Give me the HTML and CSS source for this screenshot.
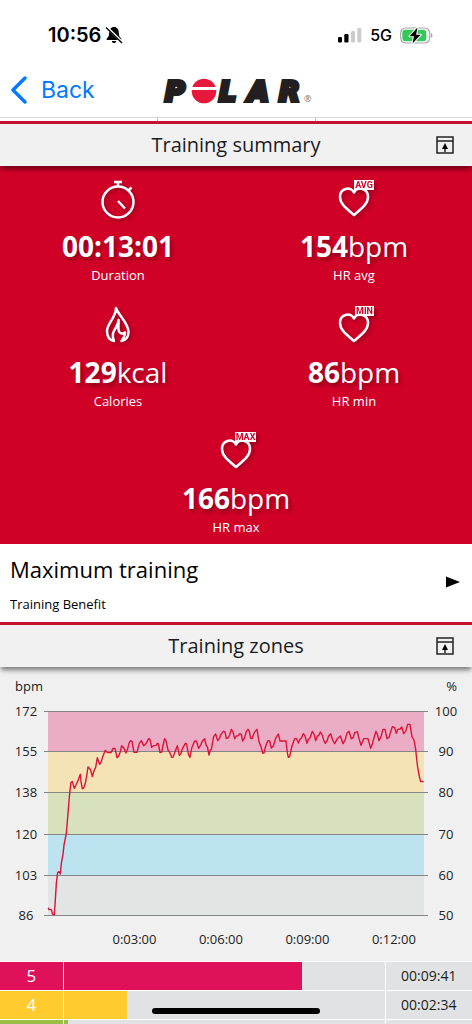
FILE: index.html
```html
<!DOCTYPE html>
<html lang="en">
<head>
<meta charset="utf-8">
<meta name="viewport" content="width=device-width, initial-scale=1">
<title>Training summary</title>
<link rel="stylesheet" href="styles.css">
</head>
<body>
<div class="app">
  <div class="status">
    <div class="status-left">
      <span class="clock">10:56</span>
      <svg class="bell" viewBox="0 0 18 18" width="18" height="18" aria-hidden="true">
        <path d="M9 1C5.800 1 4.300 3.500 4.200 6.500C4.100 10 3.400 10.800 2 12.200C1.200 13.200 1.500 14 2.500 14H15.500C16.500 14 16.800 13.200 16 12.200C14.600 10.800 13.900 10 13.800 6.500C13.700 3.500 12.200 1 9 1ZM6.800 15H11.200C11 16.500 10.200 17 9 17S7 16.500 6.800 15Z"/>
        <path d="M1.800 1.200L17.500 16.500" stroke="#fff" stroke-width="2.600"/>
        <path d="M1 1.500L17 17" stroke="#000" stroke-width="1.400"/>
      </svg>
    </div>
    <div class="status-right">
      <svg viewBox="0 0 25 16" width="25" height="16" aria-hidden="true">
        <rect x="1" y="10" width="4" height="5.500" rx="1.200"/>
        <rect x="7.300" y="7" width="4.200" height="8.500" rx="1.200"/>
        <rect x="14" y="4" width="4" height="11.500" rx="1.200" fill="#ccc"/>
        <rect x="20.300" y="1" width="4" height="14.500" rx="1.200" fill="#ccc"/>
      </svg>
      <span class="network">5G</span>
      <svg viewBox="0 0 33 17" width="33" height="17" aria-hidden="true">
        <rect x="0.700" y="1" width="29" height="15" rx="5" fill="#fff" stroke="#a5a5a5" stroke-width="1.200"/>
        <rect x="2.300" y="2.800" width="24" height="11.400" rx="3.300" fill="#34c759"/>
        <path d="M31 6V11Q32.500 10.300 32.500 8.500T31 6Z" fill="#a5a5a5"/>
        <path d="M17.500 0.500L9.500 9.300H14L12.500 16.500L20.700 7.700H16.100Z" stroke="#fff" stroke-width="2" stroke-linejoin="round"/>
        <path d="M17.500 0.500L9.500 9.300H14L12.500 16.500L20.700 7.700H16.100Z"/>
      </svg>
    </div>
  </div>

  <header class="nav">
    <button class="back" type="button">
      <svg viewBox="0 0 17 28" width="17" height="28" aria-hidden="true"><path d="M15 2L3 14L15 26" fill="none" stroke="#007aff" stroke-width="3.400" stroke-linecap="round" stroke-linejoin="round"/></svg>
      <span>Back</span>
    </button>
    <svg class="logo" viewBox="0 0 152 32" width="152" height="32" role="img" aria-label="Polar">
      <g class="wordmark">
        <text x="5" y="27">P</text>
        <text x="59" y="27">L</text>
        <text x="88" y="27">A</text>
        <text x="119" y="27">R</text>
      </g>
      <circle cx="44" cy="17" r="12.300" fill="#e6183c"/>
      <rect x="31" y="13" width="26" height="3" fill="#fff"/>
      <text class="mark" x="144" y="28">®</text>
    </svg>
  </header>
  <div class="tabs"><i></i><i></i><i></i></div>

  <main>
    <div class="section-head">
      <h2>Training summary</h2>
      <button type="button" aria-label="Collapse training summary">
        <svg viewBox="0 0 18 18" width="18" height="18"><path d="M1 1H17V17H1ZM1 5H17M9 16V11" fill="none" stroke="#222" stroke-width="1.500"/><path d="M9 7L12 13H6Z"/></svg>
      </button>
    </div>

    <section class="summary">
      <div class="stat">
        <svg viewBox="0 0 42 42"><circle cx="21" cy="24" r="15.500"/><path d="M21 9V4M17 4H25M31 13L34.500 9.500M21 23L28 30.500"/></svg>
        <p class="value"><b>00:13:01</b></p>
        <p class="label">Duration</p>
      </div>
      <div class="stat">
        <svg viewBox="0 0 42 42"><path d="M21 37C14 31 7 26 7 19C7 10 17 8 21 14.500C25 8 35 10 35 19C35 26 28 31 21 37Z"/><rect x="21" y="2" width="20" height="10"/><text x="31" y="10">AVG</text></svg>
        <p class="value"><b>154</b>bpm</p>
        <p class="label">HR avg</p>
      </div>
      <div class="stat">
        <svg viewBox="0 0 42 42"><path d="M17 37C12 36 10 32 10 27C10 19 19 14 19 4C22 12 31.500 19 31.500 28C31.500 33 28.500 36.500 24.500 37C26 34.500 28 33 28 28.500C26 30.500 23 29.500 22 27.500C20.500 24 22 20 21.500 16C21.500 18.500 20.500 21 19 23.500C17 27 14 30 17 37Z"/></svg>
        <p class="value"><b>129</b>kcal</p>
        <p class="label">Calories</p>
      </div>
      <div class="stat">
        <svg viewBox="0 0 42 42"><path d="M21 37C14 31 7 26 7 19C7 10 17 8 21 14.500C25 8 35 10 35 19C35 26 28 31 21 37Z"/><rect x="22" y="2" width="19" height="10"/><text x="31.500" y="10">MIN</text></svg>
        <p class="value"><b>86</b>bpm</p>
        <p class="label">HR min</p>
      </div>
      <div class="stat wide">
        <svg viewBox="0 0 42 42"><path d="M21 37C14 31 7 26 7 19C7 10 17 8 21 14.500C25 8 35 10 35 19C35 26 28 31 21 37Z"/><rect x="20" y="2" width="21" height="10"/><text x="30.500" y="10">MAX</text></svg>
        <p class="value"><b>166</b>bpm</p>
        <p class="label">HR max</p>
      </div>
    </section>

    <button class="benefit" type="button">
      <span class="benefit-text">
        <span class="benefit-title">Maximum training</span>
        <span class="benefit-sub">Training Benefit</span>
      </span>
      <svg viewBox="0 0 14 12" width="14" height="12" aria-hidden="true"><path d="M0 0.500L14 6L0 11.500Z"/></svg>
    </button>

    <div class="section-head">
      <h2>Training zones</h2>
      <button type="button" aria-label="Collapse training zones">
        <svg viewBox="0 0 18 18" width="18" height="18"><path d="M1 1H17V17H1ZM1 5H17M9 16V11" fill="none" stroke="#222" stroke-width="1.500"/><path d="M9 7L12 13H6Z"/></svg>
      </button>
    </div>

    <section class="chart">
      <div class="units"><span>bpm</span><span>%</span></div>
      <div class="chart-body">
        <div class="scale"><span>172</span><span>155</span><span>138</span><span>120</span><span>103</span><span>86</span></div>
        <div class="plot">
          <div class="bands"><i class="z5"></i><i class="z4"></i><i class="z3"></i><i class="z2"></i><i class="z1"></i></div>
          <svg class="curve" viewBox="144 123 1128 612" preserveAspectRatio="none" role="img" aria-label="Heart rate curve">
            <polyline points="145,713 147,719 154,719 158,733 163,734 166,690 169,640 173,608 177,605 181,612 184,580 189,553 192,525 199,490 204,430 209,370 213,337 217,335 223,355 228,345 234,332 241,313 243,335 247,356 251,354 256,340 260,318 264,291 268,295 272,300 277,320 282,303 287,292 292,263 299,283 304,275 308,260 316,241 322,248 333,248 339,235 345,235 351,263 356,258 361,245 365,227 372,235 378,249 383,236 388,217 392,212 396,214 402,247 411,247 418,220 424,212 431,227 438,221 446,206 450,208 455,232 461,227 468,226 472,220 475,221 480,248 485,246 490,222 494,206 498,213 504,240 509,247 515,262 519,262 524,248 532,227 538,256 542,252 548,235 556,220 560,222 565,252 570,262 575,235 584,213 589,213 596,235 602,225 608,212 614,206 618,225 622,230 627,255 631,240 634,238 637,222 641,200 647,192 653,212 658,206 663,193 670,184 675,186 679,205 684,204 689,195 694,178 699,186 704,206 709,198 715,197 719,191 724,193 728,213 734,203 739,184 744,178 748,184 752,205 756,206 761,192 765,185 771,178 777,215 783,230 788,249 792,249 796,232 801,218 804,212 809,213 814,234 820,228 827,205 835,192 840,213 858,213 862,248 865,262 869,260 876,228 884,206 890,206 895,219 900,208 905,203 910,191 915,198 921,220 925,208 930,204 937,184 942,192 947,212 952,198 956,197 961,186 967,196 971,210 976,220 981,213 986,198 992,191 998,210 1004,221 1012,206 1021,198 1029,221 1035,211 1041,190 1047,184 1054,206 1059,204 1064,188 1072,185 1077,205 1083,226 1091,206 1104,206 1112,235 1117,222 1123,200 1128,184 1132,193 1137,212 1143,200 1149,178 1155,178 1161,206 1167,202 1172,185 1177,170 1184,173 1189,190 1193,178 1201,177 1205,171 1211,191 1218,182 1223,163 1230,163 1236,200 1242,210 1247,238 1252,285 1257,315 1262,335 1271,335"/>
          </svg>
        </div>
        <div class="scale"><span>100</span><span>90</span><span>80</span><span>70</span><span>60</span><span>50</span></div>
      </div>
      <div class="times"><span>0:03:00</span><span>0:06:00</span><span>0:09:00</span><span>0:12:00</span></div>
    </section>

    <table class="zones">
      <tr><th scope="row" class="c5">5</th><td><div class="bar c5" style="width:74.4%"></div></td><td class="time">00:09:41</td></tr>
      <tr><th scope="row" class="c4">4</th><td><div class="bar c4" style="width:19.7%"></div></td><td class="time">00:02:34</td></tr>
      <tr><th scope="row" class="c3"></th><td><div class="bar c3" style="width:1.4%"></div></td><td class="time"></td></tr>
    </table>
  </main>
  <div class="home-indicator"></div>
</div>
</body>
</html>
```
FILE: styles.css
```css
* { box-sizing: border-box; }
body { margin: 0; background: #fff; color: #1c1c1e; font-family: "Open Sans", "Noto Sans", sans-serif; }
button { margin: 0; padding: 0; border: 0; background: none; color: inherit; font: inherit; cursor: pointer; }
svg { display: block; flex: none; }
h2, p { margin: 0; font-weight: 400; }
.app { display: flex; flex-direction: column; height: 100vh; overflow: hidden; }
main { flex: 1; min-height: 0; overflow: hidden; }

.status { display: flex; flex: none; justify-content: space-between; height: 70px; padding: 0 39px 0 48px; font-family: Inter, "Liberation Sans", sans-serif; color: #000; }
.status-left, .status-right { display: flex; align-items: center; }
.status-left { gap: 4px; }
.status-right { gap: 8px; }
.clock { font-size: 20px; font-weight: 600; }
.network { font-size: 16px; font-weight: 500; }

.nav { display: grid; flex: none; grid-template-columns: 1fr auto 1fr; align-items: center; height: 47px; padding: 0 10px 7px; }
.back { display: flex; align-items: center; gap: 14px; color: #007aff; font-family: Inter, "Liberation Sans", sans-serif; font-size: 23px; line-height: 28px; }
.logo { overflow: visible; }
.wordmark { font: italic 700 27px "DejaVu Sans", sans-serif; fill: #231f20; stroke: #231f20; stroke-width: 4; }
.mark { font: 9px "Open Sans", sans-serif; fill: #777; }
.tabs { display: grid; flex: none; grid-template-columns: repeat(3, 1fr); height: 4px; border-top: 1px solid #d9d9d9; }
.tabs i + i { border-left: 1px solid #bbb; }

.section-head { position: relative; z-index: 1; display: grid; grid-template-columns: 18px 1fr 18px; align-items: center; height: 45px; padding: 0 18px; border-top: 3px solid #c4122f; background: #f1f1f1; box-shadow: 0 4px 5px -1px rgba(0, 0, 0, .5); }
.section-head h2 { grid-column: 2; text-align: center; font-size: 20px; line-height: 30px; }

.summary { display: grid; grid-template-columns: 1fr 1fr; background: #d10027; color: #fff; text-align: center; }
.stat { display: flex; flex-direction: column; align-items: center; padding: 12px 0 8px; }
.stat.wide { grid-column: 1 / 3; }
.stat svg { width: 42px; height: 42px; fill: none; stroke: #fff; stroke-width: 2.5; stroke-linejoin: round; filter: drop-shadow(2px 2px 2px rgba(0, 0, 0, .3)); }
.stat rect { fill: #fff; stroke: none; }
.stat text { fill: #d10027; stroke: none; font: 700 9px Roboto, sans-serif; text-anchor: middle; }
.value { margin: 7px 0 1px; font-size: 28px; line-height: 38px; text-shadow: 2px 3px 4px rgba(0, 0, 0, .35); }
.label { font-size: 13px; line-height: 18px; }

.benefit { display: flex; width: 100%; align-items: center; justify-content: space-between; padding: 10px 12px 9px 10px; background: #fff; text-align: left; color: #000; }
.benefit svg { margin-bottom: 4px; }
.benefit-text { display: grid; gap: 10px; }
.benefit-title { font-size: 22px; line-height: 31px; }
.benefit-sub { font-size: 13px; line-height: 18px; }

.chart { padding: 9px 0 12px; background: #f0f0f0; color: #222; font-size: 13px; line-height: 20px; }
.units { display: flex; justify-content: space-between; padding: 0 15px; }
.chart-body { display: grid; grid-template-columns: 48px 1fr 48px; margin-top: 5px; }
.scale { display: grid; grid-template-rows: 40px 41px 42px 41px 40px 20px; padding-right: 4px; text-align: center; }
.scale:first-child { padding: 0 0 0 4px; }
.plot { position: relative; margin-top: 10px; height: 205px; }
.bands { display: grid; grid-template-rows: 40px 41px 42px 41px 41px; margin: 0 -4px; }
.bands i { padding: 0 4px; border-top: 1px solid #858585; background-clip: content-box; }
.bands i:last-child { border-bottom: 1px solid #858585; }
.z5 { background-color: #ebadc5; }
.z4 { background-color: #f5e3b5; }
.z3 { background-color: #d7e1bc; }
.z2 { background-color: #bde3f1; }
.z1 { background-color: #e3e4e4; }
.curve { position: absolute; inset: 0; width: 100%; height: 204px; overflow: visible; }
.curve polyline { fill: none; stroke: #dc1238; stroke-width: 1.4px; vector-effect: non-scaling-stroke; stroke-linejoin: round; }
.times { display: flex; margin: 4px 48px 0; }
.times::before { content: ""; flex: 0 0 11.5%; }
.times span { flex: 0 0 23%; text-align: center; }

.zones { width: 100%; table-layout: fixed; border-collapse: collapse; background: #e1e2e4; }
.zones tr { border-top: 1px solid #fff; }
.zones th, .zones td { height: 28px; padding: 0; line-height: 26px; }
.zones th { width: 63px; border-right: 1px solid #fff; color: #fff; font-size: 17px; font-weight: 400; }
.zones .time { width: 87px; border-left: 1px solid #fff; font-size: 14px; text-align: center; }
.bar { height: 28px; }
.c5 { background: #e0115b; }
.c4 { background: #ffcb2f; }
.c3 { background: #9abe48; }
.home-indicator { position: fixed; bottom: 10px; left: 50%; width: 168px; height: 6px; border-radius: 3px; background: #000; transform: translateX(-50%); }
```
